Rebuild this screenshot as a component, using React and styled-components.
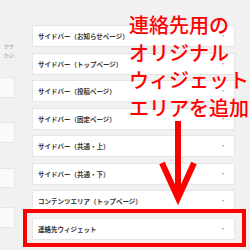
import React from 'react'
import styled, { createGlobalStyle } from 'styled-components';

const Global = createGlobalStyle`
    html, body {
        margin: 0;
        padding: 0;
        background: #f1f1f1;
        font-family: "Noto Sans CJK JP", "Noto Sans", sans-serif;
    }
`

const widgets = [
    'サイドバー（お知らせページ）',
    'サイドバー（トップページ）',
    'サイドバー（投稿ページ）',
    'サイドバー（固定ページ）',
    'サイドバー（共通・上）',
    'サイドバー（共通・下）',
    'コンテンツエリア（トップページ）',
    '連絡先ウィジェット',
];

const leftBoxes = [
    { top: 23, height: 21 },
    { top: 24, height: 21 },
    { top: 25, height: 20 },
    { top: 19, height: 21 },
];

function App() {
    return (
        <Page>
            <Global />
            <LeftCol>
                <Desc>
                    <DescLine>かク</DescLine>
                    <DescLine>たい</DescLine>
                </Desc>
                {leftBoxes.map((b, i) => (
                    <LeftBox key={i} $top={b.top} $height={b.height} />
                ))}
            </LeftCol>

            <RightCol>
                {widgets.map((w) => (
                    <Card key={w}>
                        <Title>{w}</Title>
                        <Caret />
                    </Card>
                ))}
            </RightCol>

            {/* annotation layer */}
            <Highlight />
            <Callout>
                <div>連絡先用の</div>
                <div>オリジナル</div>
                <div>ウィジェット</div>
                <div>エリアを追加</div>
            </Callout>
            <Arrow width="50" height="90" viewBox="155 118 50 90">
                <line x1="178" y1="121" x2="178" y2="194" stroke="#ff0000" strokeWidth="6" />
                <polyline points="162,163 178,198 194,163" fill="none" stroke="#ff0000" strokeWidth="6" strokeLinejoin="miter" />
            </Arrow>
        </Page>
    )
}

export default App

const Page = styled.div`
    position: relative;
    width: 250px;
    height: 250px;
    overflow: hidden;
    display: flex;
    align-items: flex-start;
`

const LeftCol = styled.div`
    width: 15px;
    flex-shrink: 0;
    display: flex;
    flex-direction: column;
    padding-top: 41px;
`

const Desc = styled.div`
    display: flex;
    flex-direction: column;
    font-size: 5px;
    line-height: 9px;
    color: #8a8a8a;
    height: 13px;
`

const DescLine = styled.div`
    text-align: right;
    white-space: nowrap;
    padding-right: 1px;
`

const LeftBox = styled.div`
    margin-top: ${p => p.$top}px;
    height: ${p => p.$height}px;
    background: #fafafa;
    border: 1px solid #e6e6e6;
    border-left: none;
    box-sizing: border-box;
`

const RightCol = styled.div`
    margin-left: 17px;
    width: 203px;
    padding-top: 25px;
    display: flex;
    flex-direction: column;
    gap: 5.5px;
`

const Card = styled.div`
    height: 22px;
    box-sizing: border-box;
    background: #ffffff;
    border: 1px solid #e5e5e5;
    display: flex;
    align-items: center;
    justify-content: space-between;
    padding: 0 10px 0 5px;
`

const Title = styled.span`
    font-size: 6.5px;
    font-weight: 600;
    color: #333333;
    white-space: nowrap;
`

const Caret = styled.span`
    width: 0;
    height: 0;
    border-left: 1.5px solid transparent;
    border-right: 1.5px solid transparent;
    border-top: 2px solid #a0a0a0;
`

const Highlight = styled.div`
    position: absolute;
    left: 23px;
    top: 209px;
    width: 223px;
    height: 38px;
    box-sizing: border-box;
    border: 4px solid #ff0000;
`

const Callout = styled.div`
    position: absolute;
    left: 129px;
    top: 11px;
    font-family: "Noto Sans CJK JP", sans-serif;
    font-size: 20px;
    line-height: 27.5px;
    font-weight: 500;
    color: #ff0000;
    white-space: nowrap;
`

const Arrow = styled.svg`
    position: absolute;
    left: 155px;
    top: 118px;
`
